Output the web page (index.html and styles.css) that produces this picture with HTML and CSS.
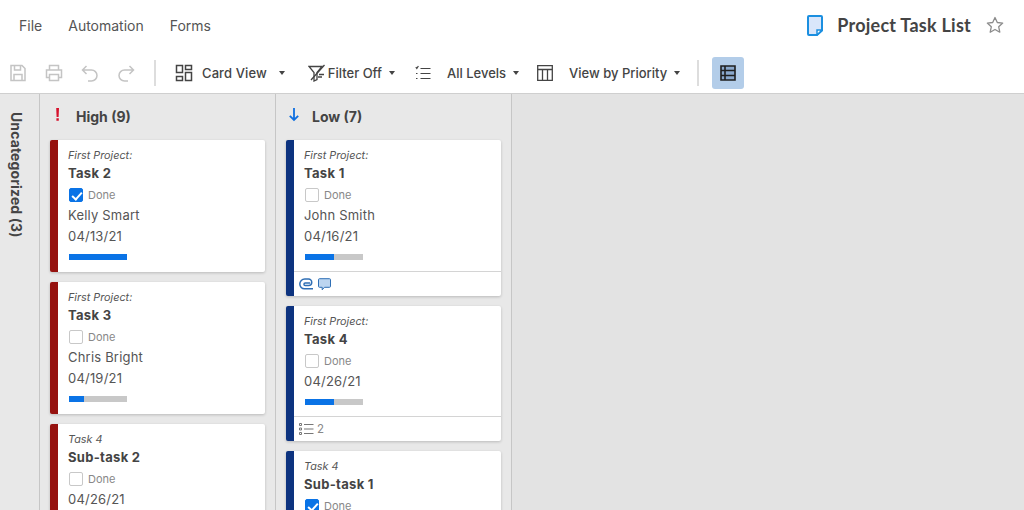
FILE: index.html
```html
<!DOCTYPE html>
<html lang="en">
<head>
    <meta charset="UTF-8">
    <title>Project Task List</title>
    <link rel="stylesheet" href="styles.css">
</head>
<body>
    <header class="topbar">
        <nav class="menu">
            <span>File</span>
            <span>Automation</span>
            <span>Forms</span>
        </nav>
        <div class="sheet-title">
            <svg class="sheet-icon" width="16" height="21" viewBox="0 0 16 21">
                <path d="M2 1h12a1 1 0 0 1 1 1v13.500L10 20H2a1 1 0 0 1-1-1V2a1 1 0 0 1 1-1z" fill="#d9e6fb" stroke="#1b8fe0" stroke-width="2"/>
                <path d="M10 20v-5h5z" fill="#fff" stroke="#1b8fe0" stroke-width="1.500"/>
            </svg>
            <h1>Project Task List</h1>
            <svg class="star" width="18" height="18" viewBox="0 0 18 18">
                <path d="M9 1.500l2.300 5 5.400.6-4 3.700 1.100 5.400L9 13.500l-4.800 2.700 1.100-5.400-4-3.700 5.400-.6z" fill="none" stroke="#8c8c8c" stroke-width="1.300" stroke-linejoin="round"/>
            </svg>
        </div>
    </header>

    <div class="toolbar">
        <div class="tool-group">
            <svg width="18" height="18" viewBox="0 0 18 18" fill="none" stroke="#c4c4c4" stroke-width="1.500">
                <path d="M2 1.500h11l3 3v12H2z"/><path d="M5.500 2v4h6V2M5 16.500v-6h8v6"/>
            </svg>
            <svg width="18" height="18" viewBox="0 0 18 18" fill="none" stroke="#c4c4c4" stroke-width="1.500">
                <path d="M4.500 6V1.500h9V6M4.500 13.500H1.500V6h15v7.500h-3"/><path d="M4.500 10.500h9v6h-9z"/>
            </svg>
            <svg width="18" height="18" viewBox="0 0 18 18" fill="none" stroke="#c4c4c4" stroke-width="1.500">
                <path d="M5.500 2L1.500 6l4 4M1.500 6h9a5.500 5.500 0 0 1 0 11H7"/>
            </svg>
            <svg width="18" height="18" viewBox="0 0 18 18" fill="none" stroke="#c4c4c4" stroke-width="1.500">
                <path d="M12.500 2l4 4-4 4M16.500 6h-9a5.500 5.500 0 0 0 0 11H11"/>
            </svg>
        </div>
        <i class="divider first"></i>
        <svg class="view-icon" width="18" height="18" viewBox="0 0 18 18" fill="none" stroke="#444" stroke-width="1.500">
            <path d="M1.500 1.500h6v7h-6zM10.500 1.500h6v4h-6zM1.500 12.500h6v4h-6zM10.500 8.500h6v8h-6z"/>
        </svg>
        <span class="tool-label card-view">Card View</span>
        <span class="caret caret-wide"></span>
        <svg class="filter-icon" width="18" height="18" viewBox="0 0 18 18" fill="none" stroke="#444" stroke-width="1.300">
            <path d="M1 2.500h13l-5 6v7l-3 1.500V8.500z"/><path d="M3 16L16.500 1M11 10.500h5M10 13h4"/>
        </svg>
        <span class="tool-label">Filter Off</span>
        <span class="caret"></span>
        <svg class="levels-icon" width="16" height="16" viewBox="0 0 16 16" fill="none" stroke="#444" stroke-width="1.200">
            <path d="M5.500 3.500H15.500M5.500 8.500H15.500M5.500 13.500H15.500"/>
            <path d="M0.800 2.200l1 1.200L3.400 1M1 8.500h1.500M1 13.500h1.500"/>
        </svg>
        <span class="tool-label">All Levels</span>
        <span class="caret"></span>
        <svg class="table-icon" width="16" height="16" viewBox="0 0 16 16" fill="none" stroke="#444" stroke-width="1.300">
            <path d="M.700.700h14.600v14.600H.700zM.700 4.500h14.600M5.500 4.500v10.800M10.500 4.500v10.800"/>
        </svg>
        <span class="tool-label">View by Priority</span>
        <span class="caret"></span>
        <i class="divider second"></i>
        <button class="grid-toggle">
            <svg width="16" height="16" viewBox="0 0 16 16">
                <path d="M1 1h14v14H1z" fill="#8aa8cc" stroke="#1f1f1f" stroke-width="1.600"/>
                <path d="M1 5.500h14M1 10.500h14M5 1v14" stroke="#1f1f1f" stroke-width="1.600"/>
            </svg>
        </button>
    </div>

    <main class="board">
        <aside class="rail"><span>Uncategorized (3)</span></aside>

        <section class="lane high">
            <h2 class="lane-head">
                <svg class="lane-icon" width="12" height="16" viewBox="0 0 12 16">
                    <path d="M4.200 1h2.800l-.4 9H4.600zM4.400 11.200h2.400v2.500H4.400z" fill="#d6112c"/>
                </svg>
                High (9)
            </h2>
            <article class="card">
                <div class="card-body">
                    <div class="parent">First Project:</div>
                    <div class="name">Task 2</div>
                    <div class="done"><span class="check on"></span>Done</div>
                    <div class="line">Kelly Smart</div>
                    <div class="line">04/13/21</div>
                    <div class="progress"><div class="fill" style="width: 100%"></div></div>
                </div>
            </article>
            <article class="card">
                <div class="card-body">
                    <div class="parent">First Project:</div>
                    <div class="name">Task 3</div>
                    <div class="done"><span class="check"></span>Done</div>
                    <div class="line">Chris Bright</div>
                    <div class="line">04/19/21</div>
                    <div class="progress"><div class="fill" style="width: 25%"></div></div>
                </div>
            </article>
            <article class="card">
                <div class="card-body">
                    <div class="parent">Task 4</div>
                    <div class="name">Sub-task 2</div>
                    <div class="done"><span class="check"></span>Done</div>
                    <div class="line">04/26/21</div>
                </div>
            </article>
        </section>

        <section class="lane low">
            <h2 class="lane-head">
                <svg class="lane-icon" width="12" height="16" viewBox="0 0 12 16">
                    <path d="M6 1v12M1.800 8.800L6 13l4.200-4.200" fill="none" stroke="#0f6fe0" stroke-width="1.800"/>
                </svg>
                Low (7)
            </h2>
            <article class="card">
                <div class="card-body">
                    <div class="parent">First Project:</div>
                    <div class="name">Task 1</div>
                    <div class="done"><span class="check"></span>Done</div>
                    <div class="line">John Smith</div>
                    <div class="line">04/16/21</div>
                    <div class="progress"><div class="fill" style="width: 50%"></div></div>
                </div>
                <footer class="card-foot">
                    <svg width="15" height="12" viewBox="0 0 15 12" fill="none" stroke="#2f6fb5" stroke-width="1.500">
                        <path d="M14 10.800H5.500a4.700 4.700 0 0 1-4.700-4.700A5 5 0 0 1 5.800 1h3.700a3.200 3.200 0 0 1 0 6.500H6.200a1.200 1.200 0 0 1 0-2.500h5"/>
                    </svg>
                    <svg width="13" height="13" viewBox="0 0 13 13">
                        <path d="M1.500.700h10a1 1 0 0 1 1 1v6.600a1 1 0 0 1-1 1H6.500l-2.300 2.500V9.300H1.500a1 1 0 0 1-1-1V1.700a1 1 0 0 1 1-1z" fill="#bcd5f0" stroke="#2f6fb5"/>
                    </svg>
                </footer>
            </article>
            <article class="card">
                <div class="card-body">
                    <div class="parent">First Project:</div>
                    <div class="name">Task 4</div>
                    <div class="done"><span class="check"></span>Done</div>
                    <div class="line">04/26/21</div>
                    <div class="progress"><div class="fill" style="width: 50%"></div></div>
                </div>
                <footer class="card-foot subtasks">
                    <svg width="15" height="12" viewBox="0 0 15 12" fill="none" stroke="#777">
                        <path d="M.500.500h2v2h-2zM.500 5h2v2h-2zM.500 9.500h2v2h-2zM5 1.500h9.500M5 6h9.500M5 10.500h9.500"/>
                    </svg>
                    <span>2</span>
                </footer>
            </article>
            <article class="card">
                <div class="card-body">
                    <div class="parent">Task 4</div>
                    <div class="name">Sub-task 1</div>
                    <div class="done"><span class="check on"></span>Done</div>
                </div>
            </article>
        </section>
    </main>
</body>
</html>
```

FILE: styles.css
```css
* {
    box-sizing: border-box;
}

html, body {
    height: 100%;
}

body {
    margin: 0;
    display: flex;
    flex-direction: column;
    overflow: hidden;
    font-family: Inter, "Liberation Sans", sans-serif;
    color: #444;
    background: #fff;
}

.topbar {
    height: 50px;
    flex: none;
    display: flex;
    align-items: center;
    justify-content: space-between;
    padding: 0 19px;
}

.menu {
    display: flex;
    gap: 26px;
    font-size: 14px;
    color: #555;
}

.sheet-title {
    display: flex;
    align-items: center;
}

.sheet-icon {
    margin-top: 1px;
}

h1 {
    margin: 0 15px 0 14px;
    font-family: Lato, sans-serif;
    font-size: 18px;
    font-weight: 700;
    letter-spacing: 0.25px;
    color: #444;
}

.star {
    margin-right: 1px;
}

.toolbar {
    height: 44px;
    flex: none;
    display: flex;
    align-items: center;
    padding: 2px 0 0 9px;
    font-size: 13px;
    font-weight: 500;
    border-bottom: 1px solid #cfcfcf;
}

.tool-group {
    display: flex;
    gap: 18px;
}

.divider {
    width: 2px;
    height: 26px;
    background: #ddd;
}

.divider.first {
    margin: 0 19px;
}

.divider.second {
    margin: 0 13px 0 17px;
}

.tool-label {
    white-space: nowrap;
}

.view-icon {
    margin-right: 9px;
}

.card-view {
    letter-spacing: 0.1px;
}

.caret {
    width: 0;
    height: 0;
    margin-left: 7px;
    border: 3px solid transparent;
    border-top: 4px solid #444;
    border-bottom: 0;
}

.caret-wide {
    margin-left: 12px;
    border-width: 3.500px;
    border-top-width: 4px;
    border-bottom-width: 0;
}

.filter-icon {
    margin: 0 2px 0 23px;
}

.levels-icon {
    margin: 0 16px 0 20px;
}

.table-icon {
    margin: 0 16px 0 18px;
}

.grid-toggle {
    width: 32px;
    height: 32px;
    padding: 0;
    display: flex;
    align-items: center;
    justify-content: center;
    border: 0;
    border-radius: 3px;
    background: #b3cde9;
}

.board {
    flex: 1;
    min-height: 0;
    display: flex;
    overflow: hidden;
    background: #e3e3e3;
}

.rail {
    width: 40px;
    flex: none;
    padding: 18px 0 0 8px;
    background: #e8e8e8;
    border-right: 1px solid #c6c6c6;
}

.rail span {
    display: block;
    writing-mode: vertical-rl;
    font-size: 14px;
    font-weight: 700;
    line-height: 16px;
    letter-spacing: 0.12px;
}

.lane {
    width: 236px;
    flex: none;
    padding: 0 10px;
    background: #e8e8e8;
    border-right: 1px solid #c6c6c6;
}

.lane-head {
    height: 46px;
    margin: 0;
    padding: 0 0 2px 2px;
    display: flex;
    align-items: center;
    gap: 12px;
    font-size: 14px;
    font-weight: 700;
}

.lane-icon {
    margin-top: -3px;
}

.card {
    margin-bottom: 10px;
    background: #fff;
    border-radius: 2px;
    box-shadow: 0 1px 3px rgba(0, 0, 0, 0.2);
    overflow: hidden;
}

.high .card {
    border-left: 8px solid #96120f;
}

.low .card {
    border-left: 8px solid #0d337f;
}

.card-body {
    padding: 9px 10px 11px;
}

.card-body:last-child {
    padding-bottom: 12px;
}

.parent {
    height: 13px;
    font-size: 10.800px;
    font-style: italic;
    line-height: 13px;
    color: #555;
}

.name {
    height: 22px;
    font-size: 13px;
    font-weight: 700;
    line-height: 22px;
    letter-spacing: 0.3px;
}

.done {
    height: 21px;
    display: flex;
    align-items: center;
    gap: 5px;
    font-size: 11px;
    color: #888;
}

.check {
    width: 14px;
    height: 14px;
    margin-left: 1px;
    position: relative;
    border: 1px solid #c8c8c8;
    border-radius: 2px;
    background: #fff;
}

.check.on {
    border-color: #0a73e6;
    background: #0a73e6;
}

.check.on::after {
    content: "";
    position: absolute;
    left: 4px;
    top: 1px;
    width: 4px;
    height: 8px;
    border: solid #fff;
    border-width: 0 2px 2px 0;
    transform: rotate(42deg);
}

.line {
    height: 21px;
    font-size: 13px;
    line-height: 21px;
    letter-spacing: 0.2px;
    color: #555;
}

.progress {
    width: 58px;
    height: 6px;
    margin: 7px 0 0 1px;
    background: #c8c8c8;
}

.fill {
    height: 100%;
    background: #0a73e6;
}

.card-foot {
    height: 25px;
    display: flex;
    align-items: center;
    gap: 4px;
    padding-left: 5px;
    border-top: 1px solid #d4d4d4;
}

.card-foot.subtasks {
    gap: 3px;
    font-size: 11.500px;
    color: #888;
}
```
